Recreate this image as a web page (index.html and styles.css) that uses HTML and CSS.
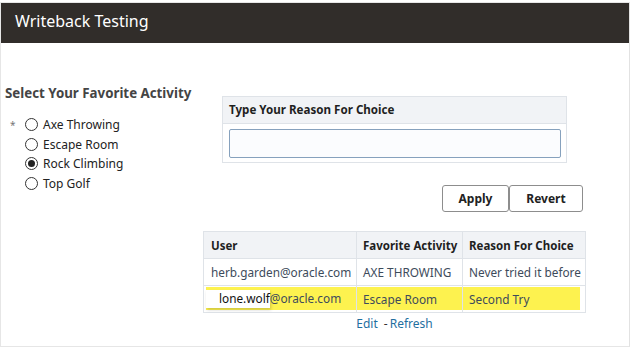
FILE: index.html
```html
<!DOCTYPE html>
<html lang="en">
<head>
  <meta charset="UTF-8">
  <title>Writeback Testing</title>
  <link rel="stylesheet" href="styles.css">
</head>
<body>
  <div class="page">
    <div class="titlebar">
      <h1 class="title">Writeback Testing</h1>
    </div>

    <div class="content">
      <div class="activity">
        <h3 class="activity-heading">Select Your Favorite Activity</h3>
        <div class="radio-list">
          <label class="radio-row">
            <span class="required">*</span>
            <input type="radio" name="activity" value="axe">
            <span>Axe Throwing</span>
          </label>
          <label class="radio-row">
            <span class="required"></span>
            <input type="radio" name="activity" value="escape">
            <span>Escape Room</span>
          </label>
          <label class="radio-row">
            <span class="required"></span>
            <input type="radio" name="activity" value="rock" checked>
            <span>Rock Climbing</span>
          </label>
          <label class="radio-row">
            <span class="required"></span>
            <input type="radio" name="activity" value="golf">
            <span>Top Golf</span>
          </label>
        </div>
      </div>

      <div class="main">
        <div class="reason-panel">
          <div class="reason-header">Type Your Reason For Choice</div>
          <div class="reason-body">
            <input type="text" class="reason-input">
          </div>
        </div>

        <div class="actions">
          <button class="btn">Apply</button>
          <button class="btn btn-revert">Revert</button>
        </div>

        <table class="results">
          <thead>
            <tr>
              <th class="col-user">User</th>
              <th class="col-activity">Favorite Activity</th>
              <th class="col-reason">Reason For Choice</th>
            </tr>
          </thead>
          <tbody>
            <tr>
              <td>herb.garden@oracle.com</td>
              <td>AXE THROWING</td>
              <td>Never tried it before</td>
            </tr>
            <tr class="highlight">
              <td><span class="patch">lone.wolf</span>@oracle.com</td>
              <td>Escape Room</td>
              <td>Second Try</td>
            </tr>
          </tbody>
        </table>

        <div class="links">
          <a href="#" class="edit">Edit</a><span class="sep">-</span><a href="#">Refresh</a>
        </div>
      </div>
    </div>
  </div>
</body>
</html>
```

FILE: styles.css
```css
:root {
  --header-bg: #312d2a;
  --border: #dfe3e8;
  --panel-bg: #f1f3f6;
  --text: #1f1f1f;
  --text-secondary: #444;
  --cell-text: #3d4b5b;
  --link: #1f6f9f;
  --highlight: #fdf24f;
}

* {
  margin: 0;
  padding: 0;
  box-sizing: border-box;
}

body {
  font-family: 'Noto Sans', 'Open Sans', sans-serif;
  background: #fff;
  color: var(--text);
}

.page {
  margin-top: 2px;
  height: 345px;
  border: 1px solid #e6e6e6;
  border-right-color: #e2e2e2;
}

.titlebar {
  height: 40px;
  background: var(--header-bg);
  display: flex;
  align-items: center;
  padding: 0 0 4px 14px;
}

.title {
  color: #fff;
  font-size: 16px;
  font-weight: 400;
}

.content {
  display: flex;
}

.activity {
  width: 202px;
  padding: 41px 0 0 4px;
}

.activity-heading {
  font-size: 13.3px;
  font-weight: 700;
  line-height: 18px;
  color: var(--text-secondary);
}

.radio-list {
  margin-top: 13px;
}

.radio-row {
  display: flex;
  align-items: center;
  height: 19.5px;
  font-size: 12px;
  color: #222;
}

.required {
  width: 20px;
  padding-left: 5px;
  font-size: 10px;
  color: #777;
}

.radio-row input {
  appearance: none;
  width: 13px;
  height: 13px;
  border: 1px solid #333;
  border-radius: 50%;
  margin-right: 5px;
  display: grid;
  place-content: center;
}

.radio-row input:checked::before {
  content: '';
  width: 7px;
  height: 7px;
  border-radius: 50%;
  background: #222;
}

.main {
  width: 383px;
  padding-top: 53px;
}

.reason-panel {
  margin-left: 19px;
  width: 345px;
  border: 1px solid var(--border);
}

.reason-header {
  height: 27px;
  background: var(--panel-bg);
  border-bottom: 1px solid var(--border);
  font-size: 11.6px;
  font-weight: 700;
  line-height: 26px;
  padding-left: 6px;
}

.reason-body {
  padding: 5px 5px 4px 6px;
  background: #fff;
}

.reason-input {
  display: block;
  width: 100%;
  height: 29px;
  border: 1px solid #86a1bd;
  border-radius: 2px;
  background: #fbfcfe;
}

.actions {
  display: flex;
  justify-content: flex-end;
  margin: 22px 3px 0 0;
}

.btn {
  height: 27px;
  width: 67px;
  border: 1px solid #8d8d8d;
  border-radius: 3px;
  background: #fff;
  font-family: inherit;
  font-size: 12px;
  font-weight: 700;
  color: #222;
}

.btn-revert {
  width: 74px;
}

.results {
  margin-top: 19px;
  width: 383px;
  border-collapse: collapse;
  border: 1px solid var(--border);
  font-size: 11.8px;
  table-layout: fixed;
}

.col-user {
  width: 153px;
}

.col-activity {
  width: 106px;
}

.results th,
.results td {
  height: 27px;
  padding: 0 0 0 6px;
  text-align: left;
  white-space: nowrap;
  border: 1px solid var(--border);
}

.results th {
  background: var(--panel-bg);
  font-size: 11.5px;
  font-weight: 700;
  color: var(--text);
}

.results td {
  color: var(--cell-text);
}

.results td:first-child,
.results th:first-child {
  padding-left: 7px;
}

.highlight td {
  background: linear-gradient(var(--highlight), var(--highlight)) 0 1px / 100% 23px no-repeat;
}

.highlight td:first-child {
  background-position: 2px 1px;
}

.highlight td:last-child {
  background-size: calc(100% - 5px) 23px;
}

.patch {
  display: inline-block;
  background: #fff;
  color: #111;
  padding: 0 0 2px 13px;
  margin-left: -5px;
  box-shadow: 1px 2px 3px rgba(0, 0, 0, 0.18);
}

.links {
  text-align: center;
  font-size: 12px;
  line-height: 18px;
  margin-top: 2px;
}

.links a {
  color: var(--link);
  text-decoration: none;
}

.edit {
  margin-right: 6px;
}

.sep {
  color: #333;
  margin-right: 2px;
}
```
